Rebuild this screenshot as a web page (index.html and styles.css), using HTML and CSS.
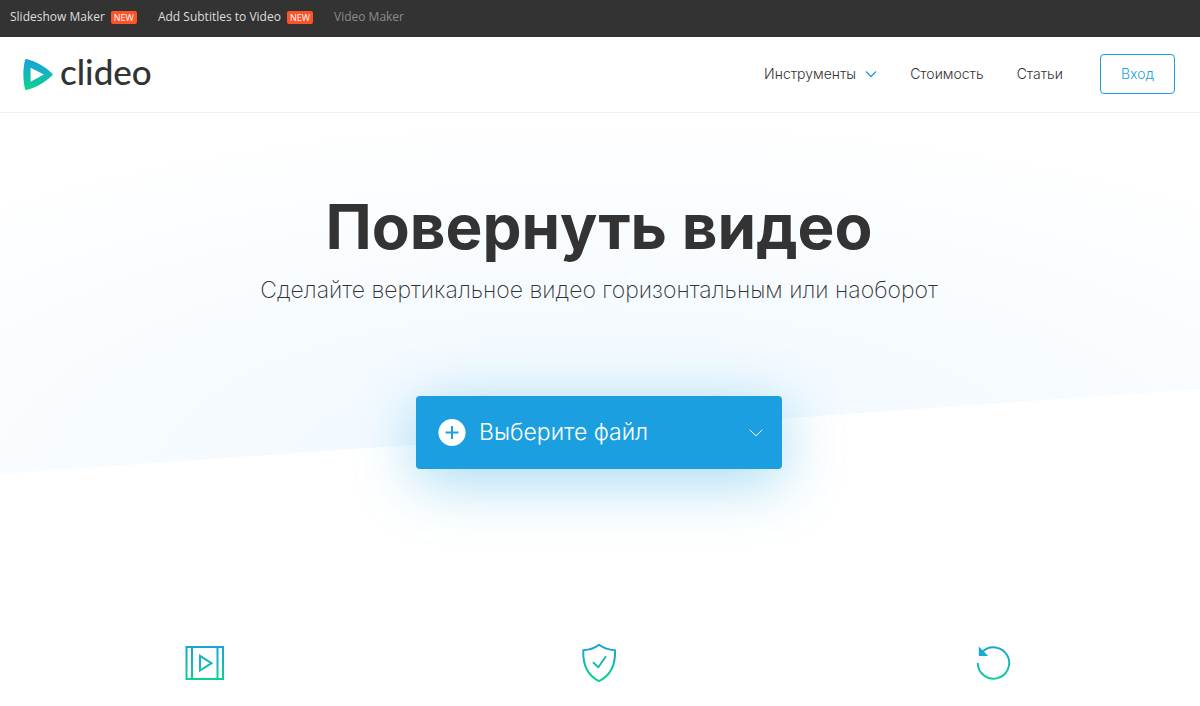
FILE: index.html
```html
<!DOCTYPE html>
<html lang="ru">
<head>
<meta charset="utf-8">
<meta name="viewport" content="width=device-width, initial-scale=1">
<title>Повернуть видео</title>
<link rel="stylesheet" href="styles.css">
</head>
<body>
<nav class="topbar" aria-label="Products">
  <a class="topbar-link" href="#">Slideshow Maker <span class="badge">NEW</span></a>
  <a class="topbar-link" href="#">Add Subtitles to Video <span class="badge">NEW</span></a>
  <a class="topbar-link topbar-link-muted" href="#">Video Maker</a>
</nav>
<header class="header">
  <a class="logo" href="#">
    <svg class="logo-mark" viewBox="0 0 30 33" aria-hidden="true">
      <defs>
        <linearGradient id="mark" gradientUnits="userSpaceOnUse" x1="8" y1="1" x2="6" y2="32">
          <stop offset="0" stop-color="#1b9fe0"/>
          <stop offset="1" stop-color="#0bd48b"/>
        </linearGradient>
      </defs>
      <path fill="url(#mark)" fill-rule="evenodd" d="M3.200 1Q2.300 .8 2 2C-.2 12 -.2 21 2 31Q2.300 32.200 3.400 32C13 29.600 22 24 29.200 17.400Q30.200 16.500 29.200 15.600C22 8.400 13 3.300 3.200 1ZM7.600 9.800L20.800 16.500L7.600 23.800Z"/>
    </svg>
    <span class="logo-name">clideo</span>
  </a>
  <nav class="menu" aria-label="Меню">
    <a class="menu-link" href="#">Инструменты
      <svg class="menu-arrow" viewBox="0 0 12 8" aria-hidden="true"><path d="M1 1.500L6 6.500L11 1.500"/></svg>
    </a>
    <a class="menu-link" href="#">Стоимость</a>
    <a class="menu-link" href="#">Статьи</a>
    <a class="login" href="#">Вход</a>
  </nav>
</header>
<main>
  <section class="hero">
    <h1 class="title">Повернуть видео</h1>
    <p class="subtitle">Сделайте вертикальное видео горизонтальным или наоборот</p>
    <div class="picker">
      <button class="picker-main" type="button">
        <svg class="picker-plus" viewBox="0 0 28 28" aria-hidden="true">
          <circle cx="14" cy="13.500" r="13.600" fill="#fff"/>
          <path d="M14 7V20M7.500 13.500H20.500" stroke="#1b9fe0" stroke-width="2"/>
        </svg>
        Выберите файл
      </button>
      <button class="picker-more" type="button" aria-label="Другие источники">
        <svg class="picker-arrow" viewBox="0 0 14 8" aria-hidden="true"><path d="M.7 .8L7 6.800L13.300 .8"/></svg>
      </button>
    </div>
  </section>
  <section class="features">
    <svg class="feature-icon" viewBox="0 0 40 40" aria-hidden="true">
      <defs>
        <linearGradient id="fresh" gradientUnits="userSpaceOnUse" x1="20" y1="1" x2="20" y2="39">
          <stop offset="0" stop-color="#1b9fe0"/>
          <stop offset="1" stop-color="#0bd48b"/>
        </linearGradient>
      </defs>
      <g fill="none" stroke="url(#fresh)" stroke-width="2">
        <path d="M2.500 4H39V36H2.500ZM8 4V36M33.500 4V36"/>
        <path d="M16 12.800V27.500L27.500 20.200Z"/>
      </g>
    </svg>
    <svg class="feature-icon" viewBox="0 0 40 40" aria-hidden="true">
      <g fill="none" stroke="url(#fresh)" stroke-width="2" stroke-linejoin="round">
        <path d="M20 1.800C16 5 10.500 6.800 4.300 7.300C3.700 22 8.500 32.500 20 38.200C31.500 32.500 36.700 22 36 7.300C29.500 6.800 24.500 5 20 1.800Z"/>
        <path d="M14 19.300L19.300 24.200L27 13.200"/>
      </g>
    </svg>
    <svg class="feature-icon" viewBox="0 0 40 40" aria-hidden="true">
      <path fill="none" stroke="url(#fresh)" stroke-width="2" d="M3.800 20A15.700 15.700 0 1 0 8.300 9"/>
      <path fill="url(#fresh)" d="M4.800 3.600V13H14.200Z"/>
    </svg>
  </section>
</main>
</body>
</html>
```
FILE: styles.css
```css
* {
  box-sizing: border-box;
}

body {
  margin: 0;
  background: #fff;
  color: #333;
  font-family: Inter, "Noto Sans", sans-serif;
}

a {
  color: inherit;
  text-decoration: none;
}

.topbar {
  display: flex;
  align-items: flex-start;
  gap: 21px;
  height: 37px;
  padding: 7px 10px;
  background: #333;
  color: #dedede;
  font: 400 12px/20px "Open Sans", sans-serif;
}

.topbar-link {
  display: flex;
  align-items: center;
  gap: 6px;
}

.topbar-link-muted {
  color: #8c8c8c;
}

.badge {
  padding: 0 3px;
  border-radius: 2px;
  background: #ff5429;
  color: #fff;
  font-size: 9px;
  line-height: 13px;
}

.header {
  display: flex;
  align-items: center;
  justify-content: space-between;
  height: 76px;
  padding: 0 25px 2px 23px;
  border-bottom: 1px solid #eee;
}

.logo {
  display: flex;
  align-items: center;
  gap: 7px;
  padding-top: 2px;
}

.logo-mark {
  width: 30px;
  height: 33px;
}

.logo-name {
  padding-bottom: 8px;
  font: 500 35px/40px Lato, sans-serif;
}

.menu {
  display: flex;
  align-items: center;
  gap: 33px;
  font-size: 14px;
  font-weight: 300;
  line-height: 20px;
}

.menu-link {
  display: flex;
  align-items: center;
  gap: 9px;
}

.menu-arrow {
  width: 12px;
  height: 8px;
  fill: none;
  stroke: #1b9fe0;
  stroke-width: 1.3;
}

.login {
  margin-left: 4px;
  padding: 9px 20px;
  border: 1px solid #1b9fe0;
  border-radius: 4px;
  color: #1b9fe0;
}

.hero {
  position: relative;
  display: flex;
  flex-direction: column;
  align-items: center;
  padding: 76px 2px 174px 0;
  isolation: isolate;
}

.hero::before {
  content: "";
  position: absolute;
  inset: 0 0 auto;
  z-index: -1;
  height: 361px;
  background: radial-gradient(ellipse 80% 100% at 50% 100%, #eff8fe, #f6fbff 50%, #fff);
  clip-path: polygon(0 0, 100% 0, 100% 276px, 0 100%);
}

.title {
  margin: 0;
  font-size: 62px;
  font-weight: 700;
  line-height: 76px;
}

.subtitle {
  margin: 11px 0 0;
  font-size: 23px;
  font-weight: 200;
  line-height: 28px;
  text-align: center;
}

.picker {
  display: flex;
  width: 366px;
  max-width: 100%;
  margin-top: 92px;
  border-radius: 4px;
  background: #1b9fe0;
  box-shadow: 0 12px 60px rgba(27, 159, 224, 0.4);
}

.picker-main,
.picker-more {
  display: flex;
  align-items: center;
  border: 0;
  background: none;
  color: #fff;
  cursor: pointer;
}

.picker-main {
  flex: 1;
  gap: 13px;
  padding: 22px;
  font: 300 23px/29px Inter, "Noto Sans", sans-serif;
}

.picker-plus {
  width: 28px;
  height: 28px;
}

.picker-more {
  padding: 0 19px;
}

.picker-arrow {
  width: 14px;
  height: 8px;
  fill: none;
  stroke: #fff;
}

.features {
  display: grid;
  grid-template-columns: repeat(3, 1fr);
  justify-items: center;
  padding: 0 9px 24px 7px;
}

.feature-icon {
  width: 40px;
  height: 40px;
}
```
